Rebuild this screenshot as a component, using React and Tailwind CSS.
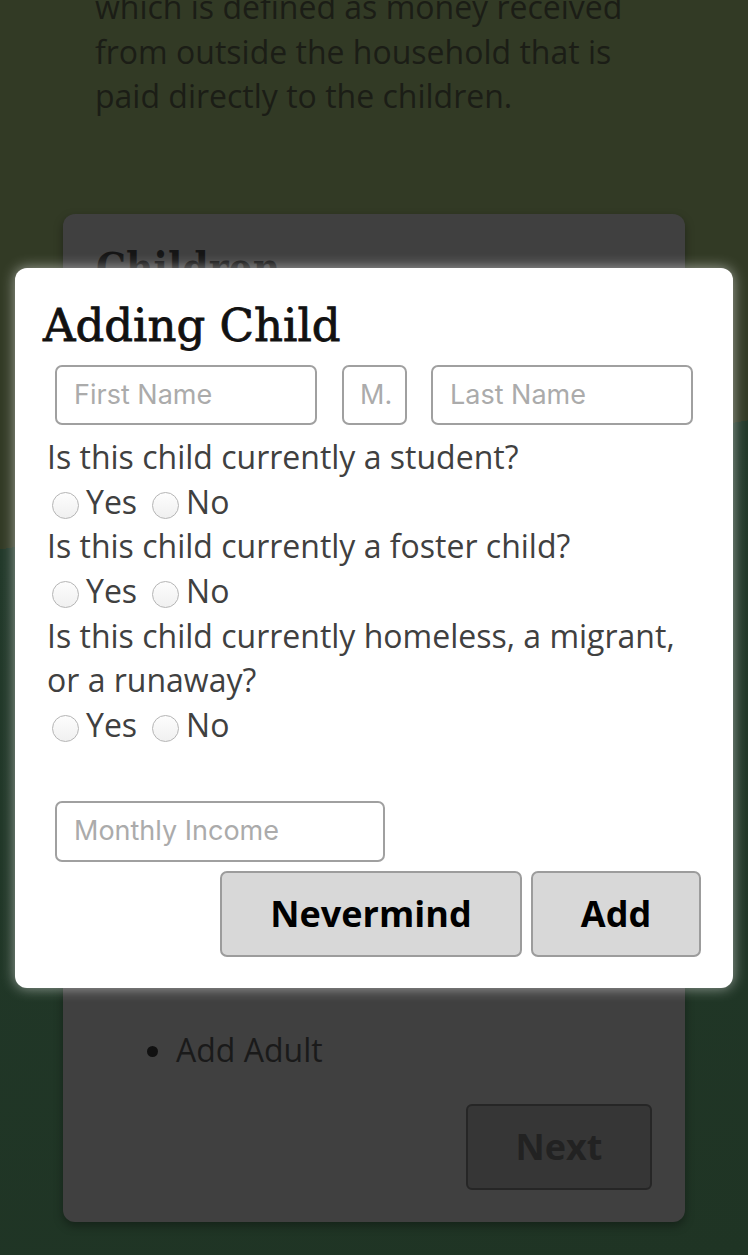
import React from "react";

function Radio({ label }) {
  return (
    <span className="inline-flex items-center">
      <span className="inline-block w-[27px] h-[27px] rounded-full border border-[#b5b5b5] bg-[linear-gradient(#fdfdfd,#f0f0f0)] mt-[6px]" />
      <span className="ml-[7px]">{label}</span>
    </span>
  );
}

function RadioRow() {
  return (
    <div className="flex items-center gap-[15px] pl-[5px] h-[44.7px]">
      <Radio label="Yes" />
      <Radio label="No" />
    </div>
  );
}

export default function App() {
  const body = { fontFamily: '"Open Sans", "Noto Sans", sans-serif' };
  const ph = { fontFamily: 'Inter, "Liberation Sans", sans-serif' };
  return (
    <div
      className="relative w-[748px] h-[1255px] overflow-hidden bg-[linear-gradient(170.2deg,#323a25_39.7%,#22392a_39.7%,#1f3424_100%)]"
      style={body}
    >
      {/* background page */}
      <div className="pl-[95px] pr-[110px] mt-[-15px] text-[32px] leading-[44.7px] text-[#1b1d16]">
        <p>which is defined as money received from outside the household that is paid directly to the children.</p>
      </div>
      <div className="mx-[63px] mt-[95px] h-[1008px] rounded-[12px] bg-[#404040] shadow-[0_4px_10px_rgba(0,0,0,0.35)] px-[33px] pt-[30px] flex flex-col">
        <h2 className="text-[42px] leading-[50px] font-bold text-[#151515]" style={{ fontFamily: '"DejaVu Serif Condensed", "DejaVu Serif", serif' }}>
          Children
        </h2>
        <div className="h-[734px]" />
        <ul className="list-disc pl-[80px] text-[32px] leading-[44px] text-[#1a1a1a] marker:text-[#111]">
          <li>Add Adult</li>
        </ul>
        <div className="flex justify-end mt-[32px] pr-[0px]">
          <div className="w-[186px] h-[86px] rounded-[6px] border-2 border-[#262626] bg-[#363636] flex items-center justify-center text-[36px] font-bold text-[#222]">
            Next
          </div>
        </div>
      </div>

      {/* modal */}
      <div className="absolute left-[15px] top-[268px] w-[718px] h-[720px] bg-white rounded-[12px] shadow-[0_0_14px_rgba(255,255,255,0.55)] pl-[28px] pr-[28px]">
        <h1
          className="text-[45px] leading-[50px] text-[#111] mt-[33px] [-webkit-text-stroke:0.8px_#111]"
          style={{ fontFamily: '"DejaVu Serif", serif', fontWeight: 400 }}
        >
          Adding Child
        </h1>
        <div className="flex items-center ml-[12px] mt-[14px] text-[27px] text-[#ababab]" style={ph}>
          <div className="w-[262px] h-[60px] rounded-[7px] border-2 border-[#a0a0a0] flex items-center pl-[17px]">First Name</div>
          <div className="w-[65px] h-[60px] rounded-[7px] border-2 border-[#a0a0a0] flex items-center pl-[16px] ml-[25px]">M.</div>
          <div className="w-[262px] h-[60px] rounded-[7px] border-2 border-[#a0a0a0] flex items-center pl-[17px] ml-[24px]">Last Name</div>
        </div>
        <div className="text-[32px] leading-[44.7px] text-[#404040] mt-[10px] ml-[4px]">
          <p>Is this child currently a student?</p>
          <RadioRow />
          <p>Is this child currently a foster child?</p>
          <RadioRow />
          <p>Is this child currently homeless, a migrant, or a runaway?</p>
          <RadioRow />
        </div>
        <div
          className="w-[330px] h-[61px] rounded-[7px] border-2 border-[#a0a0a0] flex items-center pl-[17px] ml-[12px] mt-[53px] text-[27px] text-[#ababab]"
          style={ph}
        >
          Monthly Income
        </div>
        <div className="flex justify-end gap-[9px] mt-[9px] mr-[4px]">
          <div className="w-[302px] h-[86px] rounded-[7px] border-2 border-[#9c9c9c] bg-[#d8d8d8] flex items-center justify-center text-[36px] font-bold text-black">
            Nevermind
          </div>
          <div className="w-[170px] h-[86px] rounded-[7px] border-2 border-[#9c9c9c] bg-[#d8d8d8] flex items-center justify-center text-[36px] font-bold text-black">
            Add
          </div>
        </div>
      </div>
    </div>
  );
}
